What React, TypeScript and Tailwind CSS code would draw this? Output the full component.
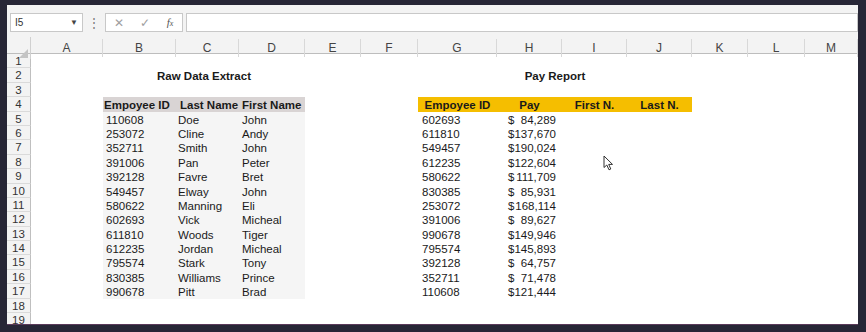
const cols = ["A", "B", "C", "D", "E", "F", "G", "H", "I", "J", "K", "L", "M"];

const rawData = [
  ["110608", "Doe", "John"],
  ["253072", "Cline", "Andy"],
  ["352711", "Smith", "John"],
  ["391006", "Pan", "Peter"],
  ["392128", "Favre", "Bret"],
  ["549457", "Elway", "John"],
  ["580622", "Manning", "Eli"],
  ["602693", "Vick", "Micheal"],
  ["611810", "Woods", "Tiger"],
  ["612235", "Jordan", "Micheal"],
  ["795574", "Stark", "Tony"],
  ["830385", "Williams", "Prince"],
  ["990678", "Pitt", "Brad"],
];

const payData = [
  ["602693", "84,289"],
  ["611810", "137,670"],
  ["549457", "190,024"],
  ["612235", "122,604"],
  ["580622", "111,709"],
  ["830385", "85,931"],
  ["253072", "168,114"],
  ["391006", "89,627"],
  ["990678", "149,946"],
  ["795574", "145,893"],
  ["392128", "64,757"],
  ["352711", "71,478"],
  ["110608", "121,444"],
];

const gridCols =
  "grid grid-cols-[24px_72px_73px_63px_66px_56px_57px_79px_65px_65px_65px_56px_57px_53px]";

function RowHeader({ n }: { n: number }) {
  return (
    <div className="h-[14.4px] bg-[#f3f3f3] border-r border-r-[#bfbfbf] border-b border-b-[#dadada] text-[11.5px] leading-[15px] text-[#333] text-center">
      {n}
    </div>
  );
}

function Toolbar() {
  return (
    <div className="h-[32px] bg-[#f3f3f3] flex items-start pt-[8px] pl-[3px] shrink-0">
      <div className="w-[73px] h-[19px] bg-white border border-[#c8c8c8] flex items-center justify-between px-[4px]">
        <span className="text-[10px] text-[#333]">I5</span>
        <span className="text-[8px] text-[#444]">▼</span>
      </div>
      <div className="w-[22px] h-[19px] flex items-center justify-center text-[12px] text-[#777]">⋮</div>
      <div className="w-[78px] h-[19px] bg-white border border-[#c8c8c8] flex items-center text-[#a0a0a0]">
        <span className="w-[26px] text-center text-[12px]">✕</span>
        <span className="w-[26px] text-center text-[12px]">✓</span>
        <span className="w-[24px] text-center text-[11px] italic text-[#555] font-['Liberation_Serif',serif]">
          f<span className="text-[8px]">x</span>
        </span>
      </div>
      <div className="ml-[3px] flex-1 h-[19px] bg-white border border-[#c8c8c8]" />
    </div>
  );
}

function Cursor() {
  return (
    <svg className="absolute left-[596px] top-[150px]" width="11" height="16" viewBox="0 0 11 16">
      <path
        d="M1 1 L1 12.5 L3.8 10 L6 14.8 L7.8 14 L5.7 9.4 L9.5 9.4 Z"
        fill="white"
        stroke="#333"
        strokeWidth="1"
        strokeLinejoin="round"
      />
    </svg>
  );
}

export default function App() {
  const rows = Array.from({ length: 19 }, (_, i) => i + 1);

  return (
    <div className="w-[866px] h-[332px] bg-[#272636] pt-[5px] pl-[7px] font-['Liberation_Sans',Arial,sans-serif]">
      <div className="relative w-[851px] h-[320px] bg-white overflow-hidden flex flex-col border-b border-b-[#5a3a5a]">
        <Toolbar />

        {/* column headers */}
        <div className={`${gridCols} h-[17px] bg-[#f3f3f3] border-b border-b-[#bdbdbd] shrink-0`}>
          <div className="relative border-r border-r-[#d0d0d0]">
            <svg className="absolute right-[2px] bottom-[1px]" width="9" height="9" viewBox="0 0 9 9">
              <path d="M9 0 L9 9 L0 9 Z" fill="#c4c4c4" />
            </svg>
          </div>
          {cols.map((c) => (
            <div
              key={c}
              className="flex items-center justify-center text-[12px] text-[#444] border-r border-r-[#d8d8d8] my-[2px]"
            >
              {c}
            </div>
          ))}
        </div>

        {/* sheet body */}
        <div className={`${gridCols} auto-rows-[14.4px] text-[11.5px] leading-[16px] text-[#1a1a1a]`}>
          {rows.map((r) => {
            const cells: React.ReactNode[] = [<RowHeader key="h" n={r} />];
            if (r === 2) {
              cells.push(<div key="a" />);
              cells.push(
                <div key="t1" className="col-span-3 text-center font-bold">
                  Raw Data Extract
                </div>
              );
              cells.push(<div key="e" />, <div key="f" />);
              cells.push(
                <div key="t2" className="col-span-4 text-center font-bold">
                  Pay Report
                </div>
              );
              cells.push(<div key="k" />, <div key="l" />, <div key="m" />);
            } else if (r === 4) {
              cells.push(<div key="a" />);
              cells.push(
                <div key="b" className="bg-[#d9d4d4] font-bold pl-[1px] whitespace-nowrap">
                  Empoyee ID
                </div>,
                <div key="c" className="bg-[#d9d4d4] font-bold pl-[4px] whitespace-nowrap">
                  Last Name
                </div>,
                <div key="d" className="bg-[#d9d4d4] font-bold pl-[3px] whitespace-nowrap">
                  First Name
                </div>
              );
              cells.push(<div key="e" />, <div key="f" />);
              ["Empoyee ID", "Pay", "First N.", "Last N."].map((h) =>
                cells.push(
                  <div key={h} className="bg-[#f5be00] font-bold text-center whitespace-nowrap">
                    {h}
                  </div>
                )
              );
              cells.push(<div key="k" />, <div key="l" />, <div key="m" />);
            } else if (r >= 5 && r <= 17) {
              const raw = rawData[r - 5];
              const pay = payData[r - 5];
              cells.push(<div key="a" />);
              cells.push(
                <div key="b" className="bg-[#f5f5f5] pl-[3px]">{raw[0]}</div>,
                <div key="c" className="bg-[#f5f5f5] pl-[2px]">{raw[1]}</div>,
                <div key="d" className="bg-[#f5f5f5] pl-[3px]">{raw[2]}</div>
              );
              cells.push(<div key="e" />, <div key="f" />);
              cells.push(
                <div key="g" className="pl-[4px]">{pay[0]}</div>,
                <div key="h" className="flex justify-between pl-[11px] pr-[6px]">
                  <span>$</span>
                  <span>{pay[1]}</span>
                </div>
              );
              cells.push(<div key="i" />, <div key="j" />, <div key="k" />, <div key="l" />, <div key="m" />);
            } else {
              cols.forEach((c) => cells.push(<div key={c} />));
            }
            return cells;
          })}
        </div>

        <Cursor />
      </div>
    </div>
  );
}
